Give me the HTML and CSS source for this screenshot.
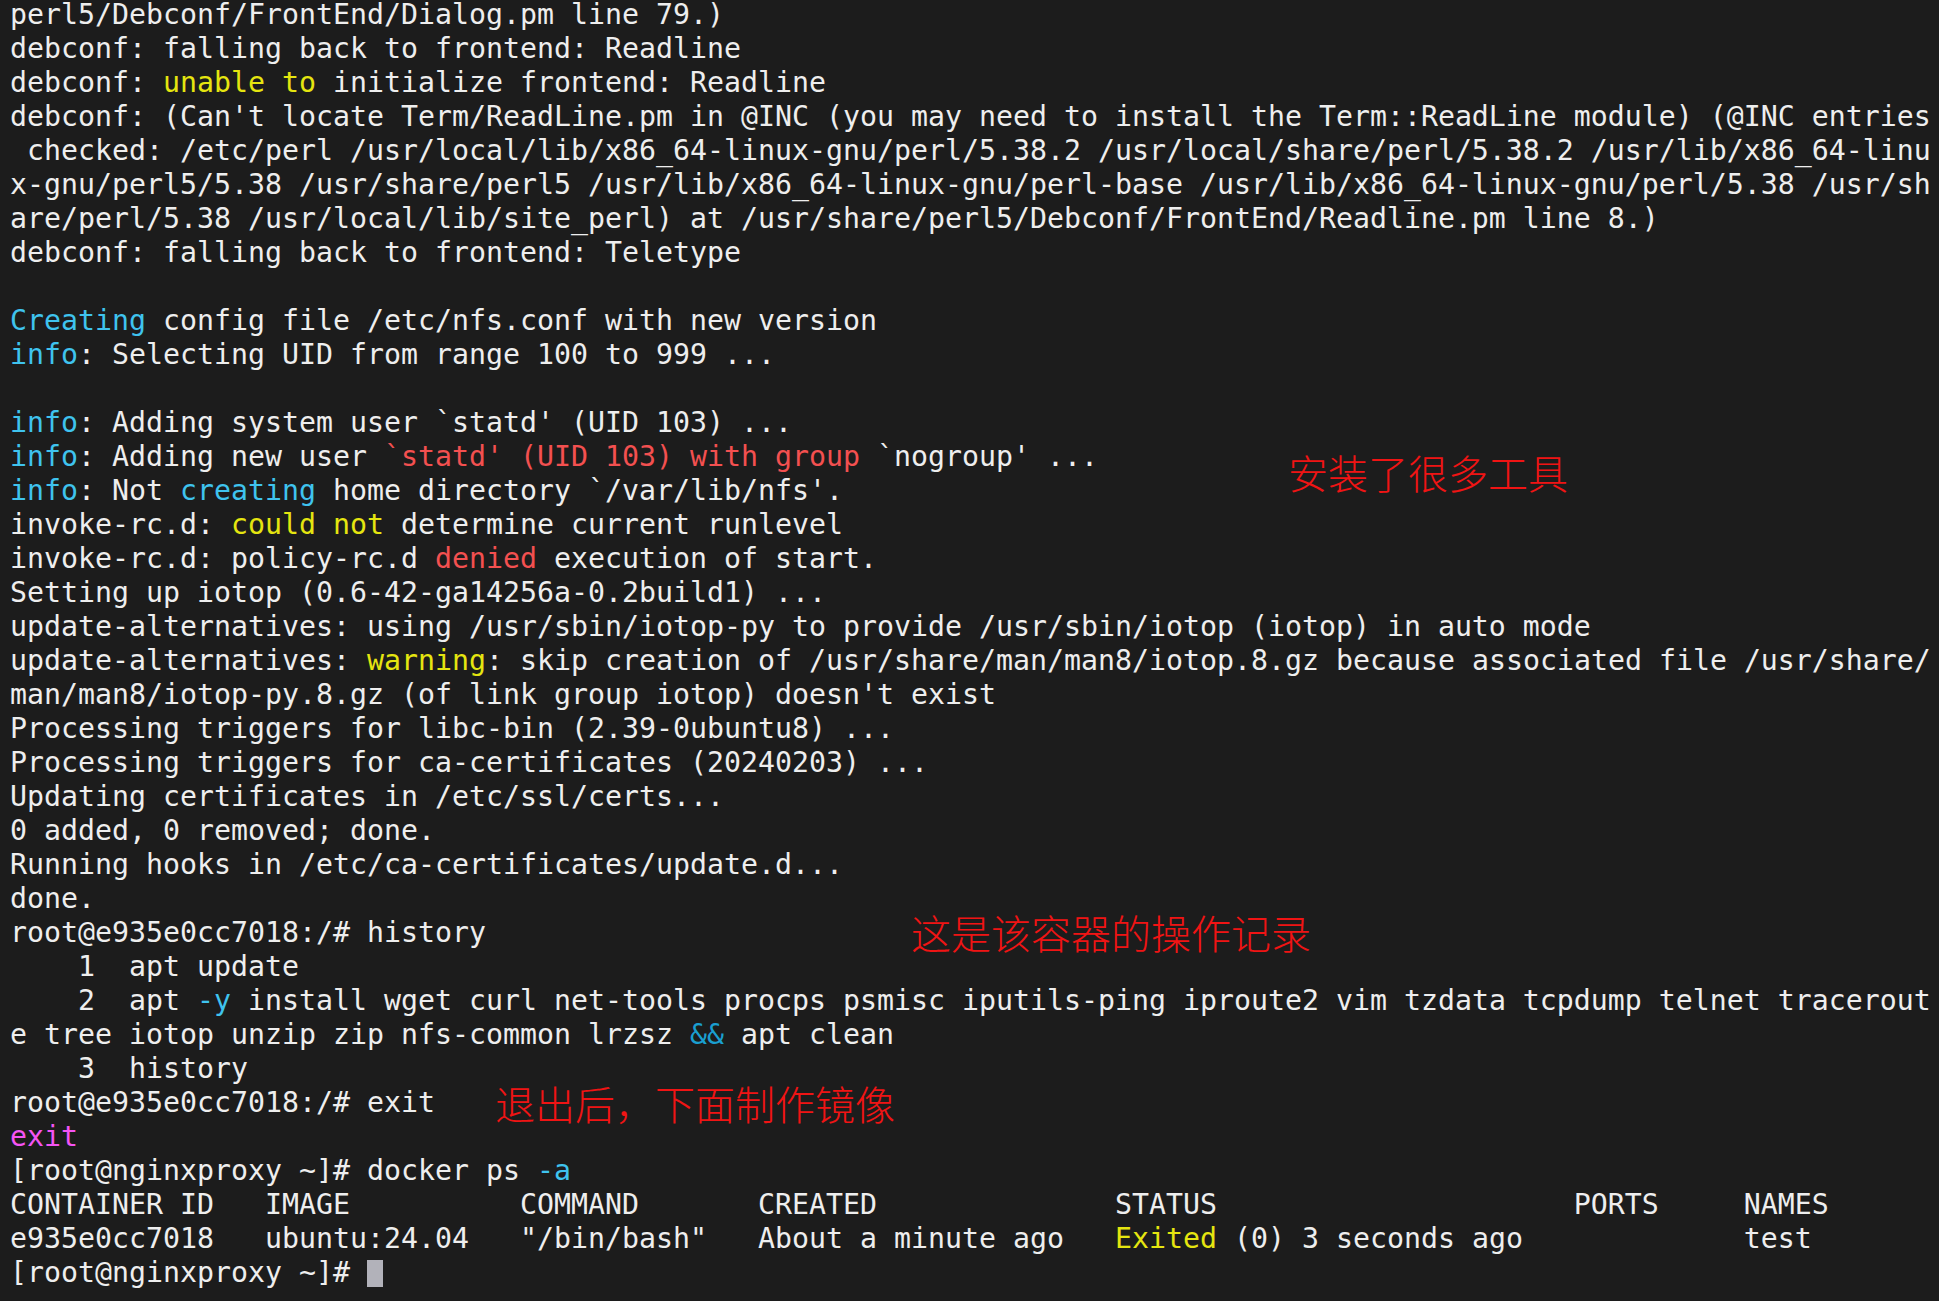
FILE: index.html
```html
<!DOCTYPE html>
<html>
    <head>
        <meta charset="utf-8">
        <title>root@nginxproxy</title>
        <link rel="stylesheet" href="styles.css">
    </head>
    <body>
        <div class='term'>
            <div class='log'>
                <div class='ln'>perl5/Debconf/FrontEnd/Dialog.pm line 79.)</div>
                <div class='ln'>debconf: falling back to frontend: Readline</div>
                <div class='ln'>debconf: <span class='yellow'>unable to</span> initialize frontend: Readline</div>
                <div class='ln'>debconf: (Can't locate Term/ReadLine.pm in @INC (you may need to install the Term::ReadLine module) (@INC entries</div>
                <div class='ln'> checked: /etc/perl /usr/local/lib/x86_64-linux-gnu/perl/5.38.2 /usr/local/share/perl/5.38.2 /usr/lib/x86_64-linu</div>
                <div class='ln'>x-gnu/perl5/5.38 /usr/share/perl5 /usr/lib/x86_64-linux-gnu/perl-base /usr/lib/x86_64-linux-gnu/perl/5.38 /usr/sh</div>
                <div class='ln'>are/perl/5.38 /usr/local/lib/site_perl) at /usr/share/perl5/Debconf/FrontEnd/Readline.pm line 8.)</div>
                <div class='ln'>debconf: falling back to frontend: Teletype</div>
                <div class='ln'></div>
                <div class='ln'><span class='cyan'>Creating</span> config file /etc/nfs.conf with new version</div>
                <div class='ln'><span class='cyan'>info</span>: Selecting UID from range 100 to 999 ...</div>
                <div class='ln'></div>
                <div class='ln'><span class='cyan'>info</span>: Adding system user `statd' (UID 103) ...</div>
                <div class='ln'><span class='cyan'>info</span>: Adding new user <span class='red'>`statd' (UID 103) with group</span> `nogroup' ...</div>
                <div class='ln'><span class='cyan'>info</span>: Not <span class='cyan'>creating</span> home directory `/var/lib/nfs'.</div>
                <div class='ln'>invoke-rc.d: <span class='yellow'>could not</span> determine current runlevel</div>
                <div class='ln'>invoke-rc.d: policy-rc.d <span class='red'>denied</span> execution of start.</div>
                <div class='ln'>Setting up iotop (0.6-42-ga14256a-0.2build1) ...</div>
                <div class='ln'>update-alternatives: using /usr/sbin/iotop-py to provide /usr/sbin/iotop (iotop) in auto mode</div>
                <div class='ln'>update-alternatives: <span class='yellow'>warning</span>: skip creation of /usr/share/man/man8/iotop.8.gz because associated file /usr/share/</div>
                <div class='ln'>man/man8/iotop-py.8.gz (of link group iotop) doesn't exist</div>
                <div class='ln'>Processing triggers for libc-bin (2.39-0ubuntu8) ...</div>
                <div class='ln'>Processing triggers for ca-certificates (20240203) ...</div>
                <div class='ln'>Updating certificates in /etc/ssl/certs...</div>
                <div class='ln'>0 added, 0 removed; done.</div>
                <div class='ln'>Running hooks in /etc/ca-certificates/update.d...</div>
                <div class='ln'>done.</div>
                <div class='ln'>root@e935e0cc7018:/# history</div>
                <div class='ln'>    1  apt update</div>
                <div class='ln'>    2  apt <span class='cyan'>-y</span> install wget curl net-tools procps psmisc iputils-ping iproute2 vim tzdata tcpdump telnet tracerout</div>
                <div class='ln'>e tree iotop unzip zip nfs-common lrzsz <span class='teal'>&amp;&amp;</span> apt clean</div>
                <div class='ln'>    3  history</div>
                <div class='ln'>root@e935e0cc7018:/# exit</div>
                <div class='ln'><span class='magenta'>exit</span></div>
                <div class='ln'>[root@nginxproxy ~]# docker ps <span class='cyan'>-a</span></div>
                <div class='ln'>CONTAINER ID   IMAGE          COMMAND       CREATED              STATUS                     PORTS     NAMES</div>
                <div class='ln'>e935e0cc7018   ubuntu:24.04   "/bin/bash"   About a minute ago   <span class='yellow'>Exited</span> (0) 3 seconds ago             test</div>
                <div class='ln'>[root@nginxproxy ~]# <span class='cursor'></span></div>
            </div>
            <span class='note note-tools'>安装了很多工具</span>
            <span class='note note-history'>这是该容器的操作记录</span>
            <span class='note note-image'>退出后，下面制作镜像</span>
        </div>
    </body>
</html>
```

FILE: styles.css
```css
            html, body{
                margin: 0;
                padding: 0;
                background-color: #1c1c1c;
                overflow: hidden;
            }
            .term{
                position: relative;
                min-height: 100vh;
                background-color: #1c1c1c;
            }
            .log{
                margin-top: -2px;
                padding-left: 10px;
                font-family: "DejaVu Sans Mono", "Liberation Mono", monospace;
                font-size: 28.24px;
                line-height: 34px;
                color: #eeeeee;
            }
            .ln{
                height: 34px;
                white-space: pre;
            }
            .yellow{
                color: #e5e510;
            }
            .cyan{
                color: #3fc3ee;
            }
            .teal{
                color: #1a9fd0;
            }
            .red{
                color: #f35050;
            }
            .magenta{
                color: #f454f4;
            }
            .cursor{
                display: inline-block;
                width: 16px;
                height: 27px;
                vertical-align: -5px;
                background-color: #b2b2ba;
            }
            /* red notes drawn over the screenshot */
            .note{
                position: absolute;
                font-family: "Noto Sans CJK SC", sans-serif;
                font-weight: 300;
                font-size: 40px;
                line-height: 40px;
                color: #f01414;
                white-space: nowrap;
            }
            .note-tools{
                left: 1288px;
                top: 454px;
            }
            .note-history{
                left: 911px;
                top: 914px;
            }
            .note-image{
                left: 495px;
                top: 1085px;
            }
```
